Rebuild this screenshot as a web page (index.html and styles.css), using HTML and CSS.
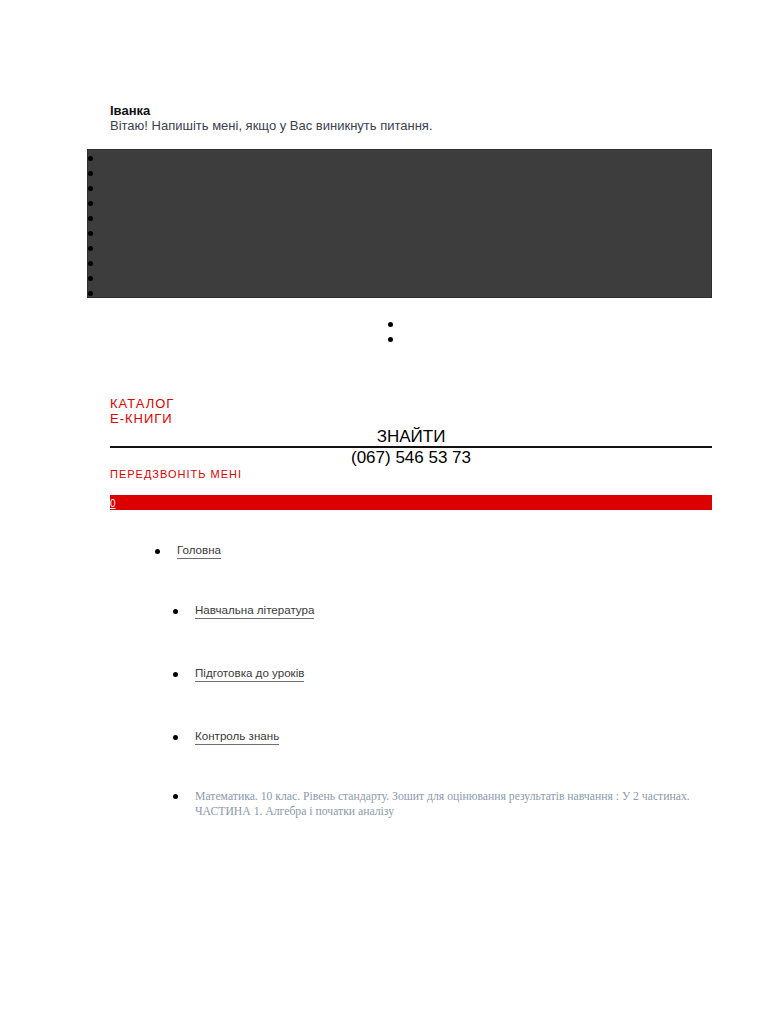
FILE: index.html
```html
<!DOCTYPE html>
<html lang="uk">
<head>
<meta charset="utf-8">
<link rel="stylesheet" href="styles.css">
</head>
<body>
<div class="chat">
  <div class="chat-name">Іванка</div>
  <div class="chat-msg">Вітаю! Напишіть мені, якщо у Вас виникнуть питання.</div>
</div>
<ul class="dark-list">
  <li></li><li></li><li></li><li></li><li></li><li></li><li></li><li></li><li></li><li></li>
</ul>
<ul class="center-list">
  <li></li><li></li>
</ul>
<div class="header">
  <a class="red-link">Каталог</a>
  <a class="red-link">Е-книги</a>
  <div class="search">ЗНАЙТИ</div>
  <div class="phone">(067) 546 53 73</div>
  <a class="red-link small">Передзвоніть мені</a>
</div>
<div class="red-bar"><a class="cart-count">0</a></div>
<ul class="crumbs">
  <li><a class="crumb">Головна</a></li>
</ul>
<ul class="crumbs nested">
  <li><a class="crumb">Навчальна література</a></li>
  <li><a class="crumb">Підготовка до уроків</a></li>
  <li><a class="crumb">Контроль знань</a></li>
  <li class="current">Математика. 10 клас. Рівень стандарту. Зошит для оцінювання результатів навчання : У 2 частинах. ЧАСТИНА 1. Алгебра і початки аналізу</li>
</ul>
</body>
</html>
```
FILE: styles.css
```css
* { box-sizing: border-box; }
body {
  margin: 0;
  font-family: "Liberation Sans", Arial, sans-serif;
  background: #fff;
  color: #000;
}
ul { list-style: none; margin: 0; padding: 0; }

.chat {
  padding: 103px 0 0 110px;
  font-size: 13px;
  line-height: 15px;
}
.chat-name { font-weight: bold; color: #111; }
.chat-msg { color: #3a4150; }

.dark-list {
  margin: 16px 0 0 87px;
  width: 625px;
  height: 149px;
  background: #3d3d3d;
  border: 1px solid #2e2e2e;
  padding-top: 1px;
}
.dark-list li {
  height: 15px;
  display: flex;
  align-items: center;
  padding-left: 0;
}
.dark-list li::before,
.center-list li::before,
.crumbs li::before {
  content: "";
  width: 5px;
  height: 5px;
  border-radius: 50%;
  background: #000;
  flex: none;
}

.center-list {
  margin-top: 19px;
  padding-left: 12px;
  display: flex;
  flex-direction: column;
  align-items: center;
}
.center-list li {
  height: 15px;
  display: flex;
  align-items: center;
}

.header {
  margin: 49px 56px 0 110px;
  display: flex;
  flex-direction: column;
}
.red-link {
  color: #e00000;
  text-transform: uppercase;
  font-size: 13px;
  line-height: 15px;
  letter-spacing: 1px;
}
.red-link.small { font-size: 11px; letter-spacing: 1px; margin-top: -1px; }
.search {
  text-align: center;
  font-size: 17px;
  line-height: 19px;
  border-bottom: 2px solid #111;
  padding-top: 1px;
}
.phone {
  text-align: center;
  font-size: 17px;
  line-height: 20px;
}

.red-bar {
  margin: 13px 56px 0 110px;
  height: 15px;
  background: #dd0000;
  font-size: 10px;
  line-height: 18px;
}
.cart-count {
  color: #fff;
  text-decoration: underline;
}

.crumbs {
  margin: 33px 0 0 155px;
}
.crumbs li {
  display: flex;
  align-items: center;
  gap: 17px;
  font-size: 11.6px;
  line-height: 14px;
}
.crumb {
  color: #3a3a3a;
  border-bottom: 1px solid #6f6f6f;
  padding-bottom: 1px;
}
.nested {
  margin: 44px 0 0 173px;
  display: flex;
  flex-direction: column;
  gap: 47px;
}
.nested li.current {
  align-items: flex-start;
  font-family: "Liberation Serif", "Times New Roman", serif;
  color: #8a9aab;
  font-size: 11.7px;
  line-height: 15px;
  width: 530px;
  margin-top: -3px;
}
.nested li.current::before { margin-top: 5px; }
```
